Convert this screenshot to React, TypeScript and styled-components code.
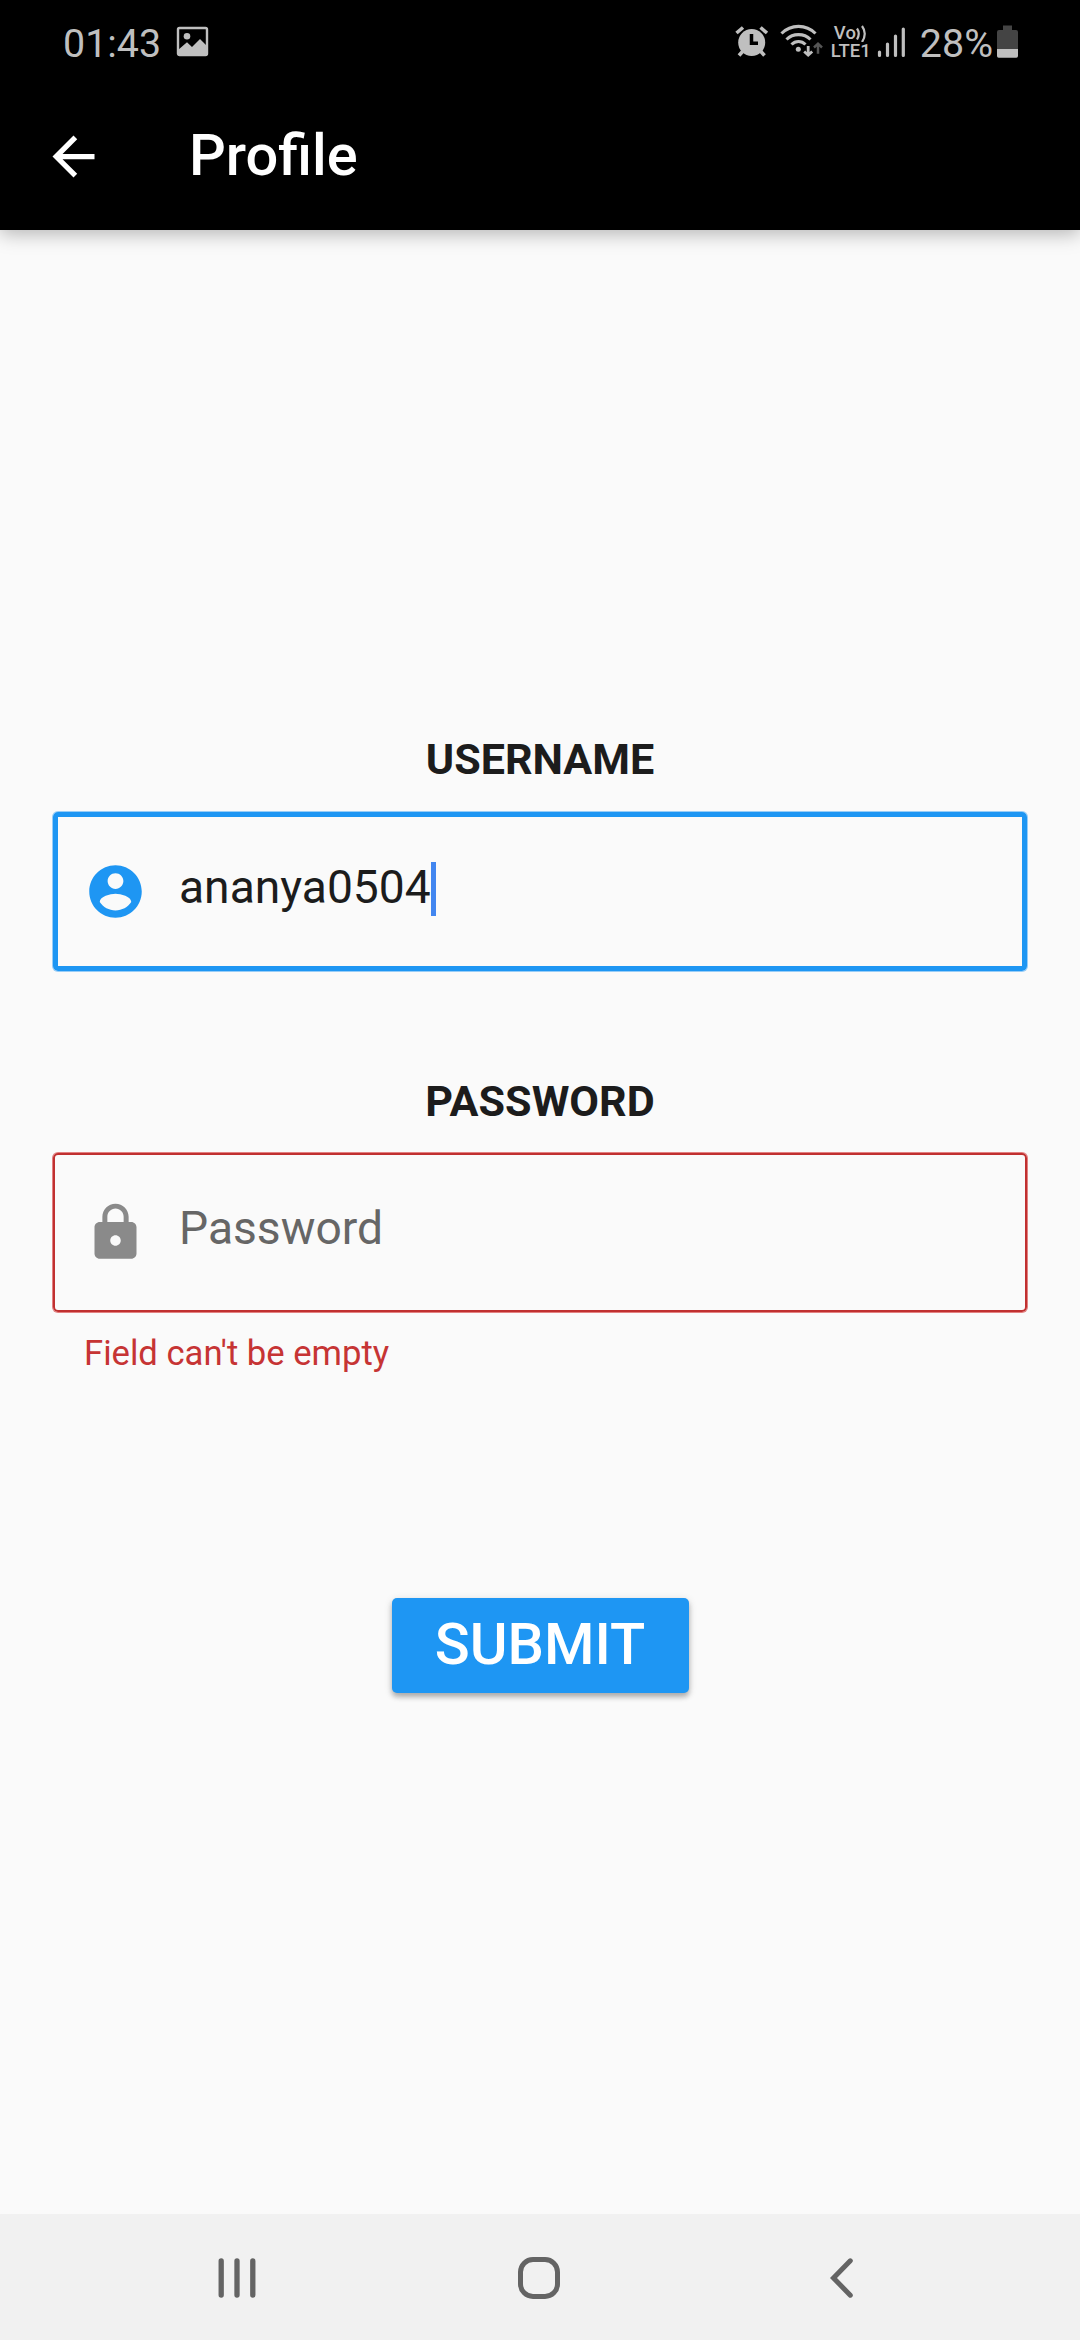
import React from 'react';
import styled, { createGlobalStyle } from 'styled-components';

const GlobalStyle = createGlobalStyle`
  *, *::before, *::after { box-sizing: border-box; }
  body { margin: 0; background: #fafafa; font-family: Roboto, "Noto Sans", sans-serif; }
`;

const Screen = styled.div`
  display: flex;
  flex-direction: column;
  width: 1080px;
  height: 2340px;
  background: #fafafa;
  overflow: hidden;
`;

const Header = styled.header`
  flex: none;
  height: 230px;
  background: #000;
  box-shadow: 0 4px 18px rgba(0, 0, 0, 0.28);
`;

const StatusBar = styled.div`
  display: flex;
  justify-content: space-between;
  height: 84px;
  padding: 0 61px 0 63px;
  color: #bfbfbf;
`;

const StatusGroup = styled.div`
  display: flex;
  align-items: flex-start;
`;

const StatusText = styled.span<{ $gap?: number }>`
  margin: 20px 0 0 ${(p) => p.$gap ?? 0}px;
  font-size: 39.4px;
  line-height: 47px;
`;

const StatusIcon = styled.svg<{ $gap?: number }>`
  display: block;
  flex: none;
  margin: 20px 0 0 ${(p) => p.$gap ?? 0}px;
`;

const VoLte = styled.div`
  display: flex;
  flex-direction: column;
  width: 40px;
  margin: 24px 0 0 6px;
  font-weight: 500;
`;

const VoLine = styled.div`
  display: flex;
  height: 18px;
  padding-left: 4px;
  font-size: 18.5px;
  line-height: 18px;
`;

const LteLine = styled.div`
  height: 18px;
  padding-left: 1px;
  font-size: 18.5px;
  line-height: 18px;
`;

const AppBar = styled.div`
  display: flex;
  align-items: center;
  height: 145px;
  padding-left: 42px;
`;

const BackButton = styled.button`
  display: flex;
  width: 63px;
  height: 63px;
  padding: 0;
  border: 0;
  background: none;
  color: #fff;
`;

const Title = styled.h1`
  margin: 0 0 3px 84px;
  color: #fff;
  font-size: 57.75px;
  font-weight: 500;
  line-height: 68px;
`;

const Form = styled.main`
  flex: 1;
  display: flex;
  flex-direction: column;
  align-items: stretch;
  padding: 504px 53px 0;
`;

const FieldGroup = styled.section<{ $height: number; $gap: number }>`
  display: flex;
  flex-direction: column;
  height: ${(p) => p.$height}px;
  margin-bottom: ${(p) => p.$gap}px;
`;

const Label = styled.label`
  height: 50px;
  color: #1c1c1c;
  font-size: 43.1px;
  font-weight: 700;
  line-height: 52px;
  text-align: center;
`;

const Field = styled.div<{ $focused?: boolean }>`
  display: flex;
  align-items: flex-start;
  height: 159px;
  margin-top: ${(p) => (p.$focused ? 28 : 27)}px;
  border: ${(p) => (p.$focused ? '5px solid #1e96f3' : '2px solid #c03030')};
  border-radius: 5px;
  box-shadow: 0 0 0 1px ${(p) => (p.$focused ? 'rgba(33, 150, 243, 0.45)' : 'rgba(211, 47, 47, 0.6)')};
  padding: ${(p) => (p.$focused ? '43px 0 0 26px' : '46px 0 0 29px')};
`;

const FieldIcon = styled.svg`
  flex: none;
  width: 63px;
  height: 63px;
`;

const Value = styled.span<{ $hint?: boolean }>`
  margin-left: 32px;
  color: ${(p) => (p.$hint ? '#666' : '#1c1c1c')};
  font-size: 46.2px;
  line-height: 54px;
`;

const Caret = styled.span`
  width: 5px;
  height: 54px;
  margin-top: 2px;
  background: #4286f0;
`;

const ErrorText = styled.p`
  height: 41px;
  margin: 21px 0 0 31px;
  color: #c63434;
  font-size: 34.65px;
  line-height: 41px;
`;

const Submit = styled.button`
  align-self: center;
  width: 297px;
  height: 95px;
  padding: 0 0 3px;
  border: 0;
  border-radius: 5px;
  background: #1e96f3;
  box-shadow: 0 4px 5px rgba(0, 0, 0, 0.24), 0 2px 8px rgba(0, 0, 0, 0.14);
  color: #fff;
  font-family: inherit;
  font-size: 57.75px;
  font-weight: 500;
  line-height: 68px;
`;

const NavBar = styled.nav`
  flex: none;
  display: flex;
  justify-content: center;
  gap: 240px;
  height: 126px;
  padding-top: 32px;
  background: #f1f1f1;
`;

const NavIcon = styled.svg`
  width: 64px;
  height: 64px;
  stroke: #646464;
  fill: none;
`;

export default function App() {
  return (
    <Screen>
      <GlobalStyle />
      <Header>
        <StatusBar>
          <StatusGroup>
            <StatusText>01:43</StatusText>
            <StatusIcon $gap={15} width="34" height="44" viewBox="0 0 34 44">
              <rect x="2" y="8" width="29" height="27" rx="1.5" fill="none" stroke="#bfbfbf" strokeWidth="2.4" />
              <circle cx="11" cy="16.2" r="3.3" fill="#bfbfbf" />
              <path d="M2 30L11 22.3L16 27L24 19L31 26V35H2Z" fill="#bfbfbf" />
            </StatusIcon>
          </StatusGroup>
          <StatusGroup>
            <StatusIcon width="34" height="44" viewBox="0 0 34 44">
              <path
                d="M1.5 13L8 7.5M25.5 7.5L32 13M8 31L4 35.5M25.5 31L29.5 35.5"
                stroke="#bfbfbf"
                strokeWidth="3.6"
              />
              <circle cx="16.7" cy="22.5" r="13.5" fill="#bfbfbf" />
              <path d="M16.5 14V23.3H23" fill="none" stroke="#000" strokeWidth="3.5" />
            </StatusIcon>
            <StatusIcon $gap={11} width="44" height="44" viewBox="0 0 44 44">
              <g fill="none" stroke="#bfbfbf" strokeWidth="3.1">
                <path d="M1.5 13.5C11 4 26 4 35.5 13.5" />
                <path d="M6.5 19.5C13 13 24 13 30.5 19.5" />
                <path d="M11.5 24.5C15.5 20.5 21.5 20.5 25.5 24.5" />
                <path d="M28.2 26V35M24.2 31.5L28.2 35.2L32.2 31.5" strokeWidth="2.8" />
                <path d="M38 33.7V24M34 27.5L38 23.7L42 27.5" strokeWidth="2.5" stroke="#555" />
              </g>
              <circle cx="18.3" cy="29.3" r="2.5" fill="#bfbfbf" />
            </StatusIcon>
            <VoLte>
              <VoLine>
                Vo
                <svg width="12" height="18" viewBox="0 0 12 18" fill="none" stroke="#bfbfbf" strokeWidth="2.2">
                  <path d="M1 4.5Q4.5 9.5 1 15.5M6 2Q11.5 9.500 6 18" />
                </svg>
              </VoLine>
              <LteLine>LTE1</LteLine>
            </VoLte>
            <StatusIcon $gap={6} width="30" height="44" viewBox="0 0 30 44">
              <path
                d="M3.5 32V35.5M11.5 24V35.5M19.5 16V35.5M27.3 9V35.5"
                stroke="#bfbfbf"
                strokeWidth="3.2"
                strokeLinecap="round"
              />
            </StatusIcon>
            <StatusText $gap={14}>28%</StatusText>
            <StatusIcon $gap={2} width="24" height="44" viewBox="0 0 24 44">
              <path d="M8 5.5H17V10H21Q23 10 23 12V29H2V12Q2 10 4 10H8Z" fill="#444" />
              <path d="M2 29H23V36Q23 37.7 21.3 37.7H3.7Q2 37.7 2 36Z" fill="#bfbfbf" />
            </StatusIcon>
          </StatusGroup>
        </StatusBar>
        <AppBar>
          <BackButton aria-label="Back">
            <svg width="63" height="63" viewBox="0 0 24 24" fill="currentColor">
              <path d="M20 11H7.83l5.59-5.59L12 4l-8 8 8 8 1.41-1.41L7.83 13H20v-2z" />
            </svg>
          </BackButton>
          <Title>Profile</Title>
        </AppBar>
      </Header>

      <Form>
        <FieldGroup $height={237} $gap={105}>
          <Label>USERNAME</Label>
          <Field $focused>
            <FieldIcon viewBox="0 0 24 24" fill="#1e96f3">
              <path d="M12 2C6.48 2 2 6.48 2 12s4.48 10 10 10 10-4.48 10-10S17.52 2 12 2zm0 3c1.66 0 3 1.34 3 3s-1.34 3-3 3-3-1.34-3-3 1.34-3 3-3zm0 14.2c-2.5 0-4.71-1.28-6-3.22.03-1.99 4-3.08 6-3.08 1.99 0 5.97 1.09 6 3.08-1.29 1.94-3.5 3.22-6 3.22z" />
            </FieldIcon>
            <Value>ananya0504</Value>
            <Caret />
          </Field>
        </FieldGroup>
        <FieldGroup $height={349} $gap={173}>
          <Label>PASSWORD</Label>
          <Field>
            <FieldIcon viewBox="0 0 24 24" fill="#8a8a8a">
              <path d="M18 8h-1V6c0-2.76-2.24-5-5-5S7 3.24 7 6v2H6c-1.1 0-2 .9-2 2v10c0 1.1.9 2 2 2h12c1.1 0 2-.9 2-2V10c0-1.1-.9-2-2-2zm-6 9c-1.1 0-2-.9-2-2s.9-2 2-2 2 .9 2 2-.9 2-2 2zm3.1-9H8.9V6c0-1.71 1.39-3.1 3.1-3.1 1.71 0 3.1 1.39 3.1 3.1v2z" />
            </FieldIcon>
            <Value $hint>Password</Value>
          </Field>
          <ErrorText>Field can't be empty</ErrorText>
        </FieldGroup>
        <Submit>SUBMIT</Submit>
      </Form>

      <NavBar>
        <NavIcon viewBox="0 0 64 64" strokeWidth="5.3" strokeLinecap="round">
          <path d="M17.2 15V49M33 15V49M48.8 15V49" />
        </NavIcon>
        <NavIcon viewBox="0 0 64 64" strokeWidth="5">
          <rect x="12.5" y="13.5" width="37" height="37" rx="12.5" />
        </NavIcon>
        <NavIcon viewBox="0 0 64 64" strokeWidth="5" strokeLinecap="round">
          <path d="M38.3 14.8L21.5 32L38.3 49.2" />
        </NavIcon>
      </NavBar>
    </Screen>
  );
}
